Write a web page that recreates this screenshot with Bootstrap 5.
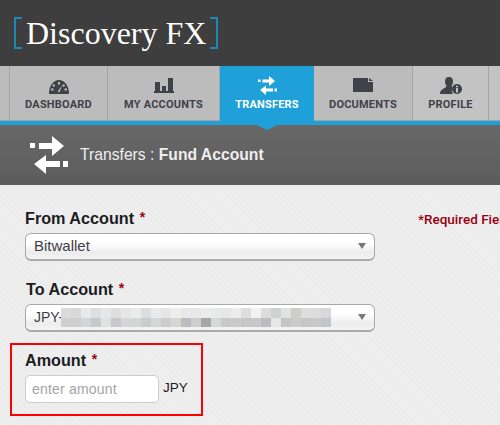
<!DOCTYPE html>
<html lang="en">
<head>
  <meta charset="UTF-8">
  <title>Transfers : Fund Account</title>
  <link href="https://cdn.jsdelivr.net/npm/bootstrap@5.3.3/dist/css/bootstrap.min.css" rel="stylesheet">
  <style>
    html, body { height: 425px; overflow: hidden; }
    body {
      font-family: "Liberation Sans", Arial, sans-serif;
      background: repeating-linear-gradient(45deg, #eeeeee 0 2px, #ececec 2px 4px);
      color: #1c1c24;
    }
    .top-head { height: 66px; background: #3e3e3e; padding-left: 14px; }
    .brand-name {
      font-family: "Liberation Serif", "Times New Roman", serif;
      font-size: 32px;
      line-height: 1;
      color: #fff;
    }
    .brand-br {
      width: 8px; height: 32px;
      border: 2px solid #1b88b8;
    }
    .brand-br.open { border-right: 0; margin-right: 4px; }
    .brand-br.shut { border-left: 0; margin-left: 4px; }
    .tab-bar {
      height: 59px;
      background: #bbb;
      border-bottom: 4px solid #1fa0d8;
      flex-wrap: nowrap;
    }
    .tab-item {
      height: 55px;
      background: #bcbcbc;
      border-right: 1px solid #a4a4a4;
      border-bottom: 1px solid #a4a4a4;
      font-family: Roboto, "Liberation Sans", sans-serif;
      font-weight: 700;
      font-size: 11px;
      letter-spacing: .2px;
      color: #41414a;
      text-decoration: none;
      text-transform: uppercase;
      padding-top: 7px;
      flex: none;
      white-space: nowrap;
    }
    .tab-item svg { display: block; height: 22px; margin-bottom: 2px; }
    .tab-stub { width: 10px; }
    .tab-dash { width: 98px; }
    .tab-acct { width: 112px; }
    .tab-tran { width: 94px; background: #1fa0d8; color: #fff; border: 0; height: 55px; position: relative; }
    .tab-tran::after {
      content: "";
      position: absolute;
      left: 37px; top: 59px;
      border: 10px solid transparent;
      border-top: 5px solid #1fa0d8;
      border-bottom: 0;
    }
    .tab-docs { width: 99px; }
    .tab-prof { width: 76px; background: #c3c3c3; }
    .tab-rest { flex: 1; background: #c3c3c3; border-right: 0; }
    .sub-head {
      height: 60px;
      background: linear-gradient(#686868, #5c5c5c);
      color: #eee;
      font-size: 15.7px;
      padding-left: 30px;
    }
    .sub-head svg { margin-right: 12px; }
    .form-side { width: 350px; margin-left: 25px; }
    .req-note {
      margin: 24px 0 0 43px;
      white-space: nowrap;
      font-family: Roboto, "Liberation Sans", sans-serif;
      font-weight: 500;
      font-size: 13.5px;
      color: #990012;
    }
    .field-lbl { font-size: 16.2px; font-weight: 700; line-height: 18px; margin: 0 0 6px; display: block; }
    .field-lbl i { color: #a00018; font-style: normal; font-size: 14px; vertical-align: 2px; margin-left: 1px; }
    .lbl-first { margin-top: 23px; }
    .lbl-second { margin-top: 18px; margin-left: 1px; }
    .pick {
      height: 28px;
      padding: 0 30px 0 8px;
      font-size: 15px;
      color: #3e3e48;
      border: 1px solid #a9a9a9;
      border-bottom-width: 2px;
      border-radius: 6px;
      background-color: #fff;
      background-image:
        url("data:image/svg+xml,%3Csvg xmlns='http://www.w3.org/2000/svg' width='8' height='6'%3E%3Cpath d='M0 0h8L4 6z' fill='%23777'/%3E%3C/svg%3E"),
        linear-gradient(#fff 0 35%, #ececec 75%, #f4f4f4);
      background-repeat: no-repeat;
      background-position: 332px 9px, 0 0;
      background-size: 8px 6px, 100% 100%;
    }
    .pick-small { font-size: 14px; }
    .pick-wrap { position: relative; }
    .blur-cells {
      position: absolute;
      left: 36px; top: 4px;
      display: grid;
      grid-template-columns: repeat(27, 10px);
      grid-auto-rows: 9.5px;
    }
    .amount-box {
      width: 193px;
      height: 73px;
      margin: 11px 0 0 -15px;
      padding: 5px 0 0 13px;
      border: 2px solid #f00;
    }
    .amount-lbl { margin-bottom: 6px; }
    .amount-input {
      width: 134px;
      height: 28px;
      padding: 0 6px;
      font-size: 14px;
      border: 1px solid #ccc;
      border-radius: 5px;
      box-shadow: none;
    }
    .amount-input::placeholder { color: #a4a4a4; letter-spacing: .2px; }
    .unit { font-size: 13.5px; margin-left: 4px; margin-top: -1px; }
  </style>
</head>
<body>
  <div class="top-head d-flex align-items-center">
    <span class="brand-br open"></span>
    <span class="brand-name">Discovery FX</span>
    <span class="brand-br shut"></span>
  </div>

  <nav class="nav tab-bar">
    <span class="tab-item tab-stub"></span>
    <a class="tab-item tab-dash d-flex flex-column align-items-center" href="#">
      <svg width="20" viewBox="0 -7 20 22"><path fill="#41414a" fill-rule="evenodd" d="M0 13.500C0 5.500 4.500 0 10 0s10 5.500 10 13.500q0 .5-.5 .5H.5q-.5 0-.5-.5zM9 2v2.500h2V2zM4.500 4l-1.200 1.300 1.500 1.600 1.400-1.400zM14.800 4l-1.700 1.600 1.400 1.400 1.600-1.500zM2 8.500v2h2.500v-2zM15.500 8.500v2H18v-2zM8.700 11.500l1.800 .8L13 5.500z"/></svg>
      Dashboard
    </a>
    <a class="tab-item tab-acct d-flex flex-column align-items-center" href="#">
      <svg width="20" viewBox="0 -5 20 22"><path fill="#41414a" d="M0 13h20v2H0zM1 4h5v9H1zM8 8h4v5H8zM14 0h5v13h-5z"/></svg>
      My Accounts
    </a>
    <a class="tab-item tab-tran d-flex flex-column align-items-center" href="#">
      <svg width="19" viewBox="0 -6 38 44"><path fill="#fff" d="M0 7h5v5H0zM9 7h13V0l12 10-12 10v-7H9zM33 25h5v6h-5zM30 25H16v-6L4 28l12 10v-7h14z"/></svg>
      Transfers
    </a>
    <a class="tab-item tab-docs d-flex flex-column align-items-center" href="#">
      <svg width="20" viewBox="0 -5 20 22"><path fill="#41414a" d="M0 0h15v4h5v10H0z"/><path fill="#41414a" d="M16 0l4 3h-4z"/></svg>
      Documents
    </a>
    <a class="tab-item tab-prof d-flex flex-column align-items-center" href="#">
      <svg width="22" viewBox="0 -4 22 22"><path fill="#41414a" d="M9 0c3 0 4 2 4 4.500 0 2-1 3.500-1.500 4.500l1 1.500c-1 1.500-1 4 .5 6.500H0c0-4 3-5 5.500-6.500L6.500 9C6 8 5 6.500 5 4.500 5 2 6 0 9 0z"/><circle cx="17" cy="12" r="5" fill="#41414a"/><path fill="#c3c3c3" d="M16 8.700h2v1.600h-2zM16 11h2v4.500h-2z"/></svg>
      Profile
    </a>
    <span class="tab-item tab-rest"></span>
  </nav>

  <div class="sub-head d-flex align-items-center">
    <svg width="38" height="38" viewBox="0 0 38 38"><path fill="#fff" d="M0 7h5v5H0zM9 7h13V0l12 10-12 10v-7H9zM33 25h5v6h-5zM30 25H16v-6L4 28l12 10v-7h14z"/></svg>
    <span>Transfers : <b>Fund Account</b></span>
  </div>

  <main class="d-flex">
    <form class="form-side flex-shrink-0" onsubmit="return false">
      <label class="field-lbl lbl-first">From Account <i>*</i></label>
      <select class="form-select pick"><option>Bitwallet</option></select>

      <label class="field-lbl lbl-second">To Account <i>*</i></label>
      <div class="pick-wrap">
        <select class="form-select pick pick-small"><option>JPY-</option></select>
        <div class="blur-cells" id="blurCells"></div>
      </div>

      <div class="amount-box">
        <label class="field-lbl amount-lbl">Amount <i>*</i></label>
        <div class="d-flex align-items-center">
          <input type="text" class="form-control amount-input" placeholder="enter amount">
          <span class="unit">JPY</span>
        </div>
      </div>
    </form>
    <div class="req-note">*Required Fields</div>
  </main>

  <script>
    // the account number is pixelated in the picture
    var topRow = ["dadada","d8d8d8","e6eaec","dedede","e4e8e8","dedede","e6e6e6","eaecec","dadede","eaeaea","e6e6e6","eeeeea","e8e8e8","e8e8e8","ecece8","e8eaea","e6e6e6","ececec","dedede","f2f2f2","dcdcdc","cfd1d2","e2e2e2","cdcdcb","dededf","dcdcdf","d8d8dc"];
    var lowRow = ["d0cece","cecece","d2d6d8","c8c8c8","dee2e2","c8c8cc","d6d6d6","d4d6d6","c8cccc","d6d6d6","cccccc","d6d6d2","bcbcc0","cececc","a9a6aa","d4d8d8","c8c8c8","cacaca","c6c6c6","c8c8c8","bcbcc0","e6e6e6","c4c6c6","cccccc","c6c6c4","c8c8c8","c2c6ca"];
    var cells = document.getElementById("blurCells");
    topRow.concat(lowRow).forEach(function(c) {
      var s = document.createElement("span");
      s.style.background = "#" + c;
      cells.appendChild(s);
    });
  </script>
  <script src="https://cdn.jsdelivr.net/npm/bootstrap@5.3.3/dist/js/bootstrap.bundle.min.js"></script>
</body>
</html>
